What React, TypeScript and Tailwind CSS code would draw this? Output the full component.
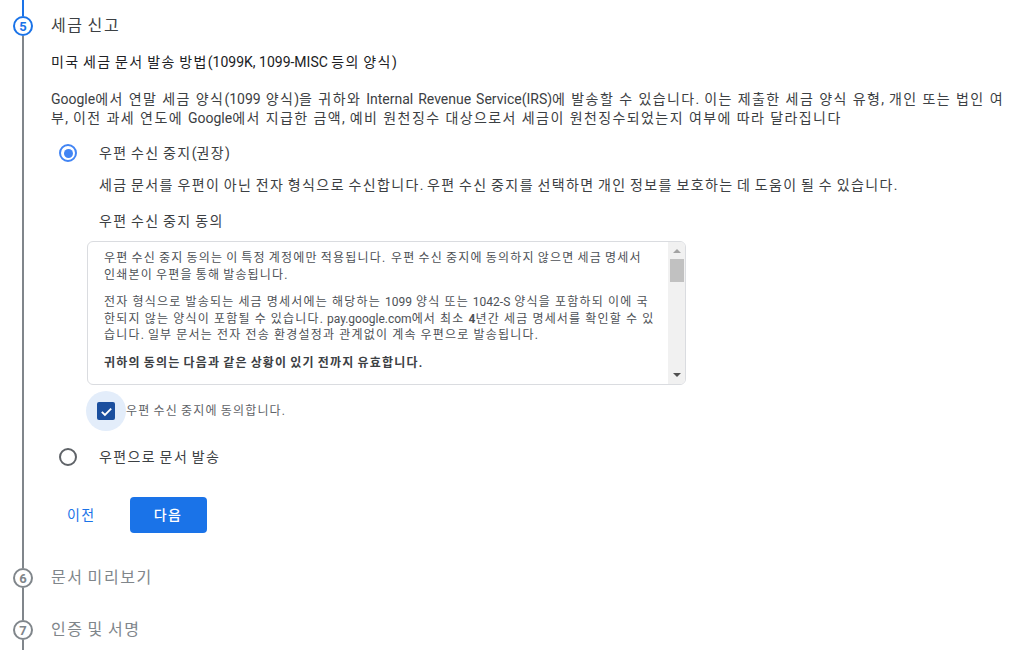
import type { ReactNode } from 'react';

const font = "font-['Roboto','Noto_Sans_CJK_KR',sans-serif]";

// Noto's Hangul is a little narrower than the reference face, so widen only the Hangul runs
function Ko({ children }: { children: string }) {
  const parts = children.split(/([\uAC00-\uD7A3\u3131-\u318E]+)/);
  return (
    <>
      {parts.map((p, i) =>
        i % 2 === 1 ? (
          <span key={i} className="tracking-[0.1em]">
            {p}
          </span>
        ) : (
          p
        ),
      )}
    </>
  );
}

function StepCircle({ n, active }: { n: number; active?: boolean }) {
  return (
    <div
      className={
        active
          ? 'flex h-5 w-5 shrink-0 items-center justify-center rounded-full border-2 border-[#1a73e8] text-[13px] font-bold leading-none text-[#1a73e8]'
          : 'flex h-5 w-5 shrink-0 items-center justify-center rounded-full border-2 border-[#80868b] text-[13px] font-bold leading-none text-[#80868b]'
      }
    >
      {n}
    </div>
  );
}

function Radio({ checked }: { checked?: boolean }) {
  return checked ? (
    <div className="flex h-[18px] w-[18px] items-center justify-center rounded-full border-2 border-[#4285f4]">
      <div className="h-[9px] w-[9px] rounded-full bg-[#4285f4]" />
    </div>
  ) : (
    <div className="h-[18px] w-[18px] rounded-full border-2 border-[#5f6368]" />
  );
}

function FakeScrollbar() {
  return (
    <div className="flex w-[17px] shrink-0 flex-col items-center bg-[#f1f1f1]">
      <div className="mt-[7px] h-0 w-0 border-x-[4px] border-b-[4px] border-x-transparent border-b-[#a3a3a3]" />
      <div className="mt-[6px] h-[23px] w-[14px] bg-[#c1c1c1]" />
      <div className="flex-1" />
      <div className="mb-[7px] h-0 w-0 border-x-[4px] border-t-[4px] border-x-transparent border-t-[#505050]" />
    </div>
  );
}

function StepRow({ left, children, className }: { left: ReactNode; children: ReactNode; className?: string }) {
  return (
    <div className={'flex ' + (className ?? '')}>
      <div className="flex w-[46px] shrink-0 flex-col items-center">{left}</div>
      <div className="min-w-0 flex-1 pl-[5px]">{children}</div>
    </div>
  );
}

export default function App() {
  return (
    <div className={`${font} flex h-[650px] flex-col overflow-hidden bg-white text-[#3c4043]`}>
      {/* step 5 */}
      <StepRow
        left={
          <>
            <div className="h-4 w-[2px] bg-[#1a73e8]" />
            <StepCircle n={5} active />
            <div className="w-[2px] flex-1 bg-[#80868b]" />
          </>
        }
      >
        <div className="pb-[25px] pr-[12px] pt-[14px]">
          <h2 className="text-[16px] leading-6 text-[#3c4043]">
            <Ko>세금 신고</Ko>
          </h2>
          <p className="mt-[14px] text-[14px] leading-5 text-[#202124]">
            <Ko>미국 세금 문서 발송 방법(1099K, 1099-MISC 등의 양식)</Ko>
          </p>
          <p className="mt-[18px] text-[14px] leading-[19px] text-[#3c4043] [word-spacing:1.5px]">
            <Ko>
              Google에서 연말 세금 양식(1099 양식)을 귀하와 Internal Revenue Service(IRS)에 발송할 수 있습니다. 이는 제출한 세금 양식 유형, 개인 또는 법인 여부, 이전 과세 연도에 Google에서 지급한 금액, 예비 원천징수 대상으로서 세금이 원천징수되었는지 여부에 따라 달라집니다
            </Ko>
          </p>

          <div className="mt-[13px] flex h-6 items-center pl-[8px]">
            <Radio checked />
            <span className="ml-[22px] text-[14px] text-[#3c4043]">
              <Ko>우편 수신 중지(권장)</Ko>
            </span>
          </div>

          <div className="pl-[48px]">
            <p className="mt-[10px] text-[14px] leading-5 text-[#3c4043]">
              <Ko>
                세금 문서를 우편이 아닌 전자 형식으로 수신합니다. 우편 수신 중지를 선택하면 개인 정보를 보호하는 데 도움이 될 수 있습니다.
              </Ko>
            </p>
            <p className="mt-[16px] text-[14px] leading-5 text-[#3c4043]">
              <Ko>우편 수신 중지 동의</Ko>
            </p>
          </div>

          <div className="ml-[36px] mt-[10px] flex h-[144px] w-[599px] overflow-hidden rounded-[6px] border border-[#dadce0]">
            <div className="flex-1 overflow-hidden pl-4 pr-3 pt-[8px] text-[12px] leading-[16.5px] text-[#4d5156]">
              <p>
                <Ko>
                  {'우편 수신 중지 동의는 이 특정 계정에만 적용됩니다.\u00a0 우편 수신 중지에 동의하지 않으면 세금 명세서 인쇄본이 우편을 통해 발송됩니다.'}
                </Ko>
              </p>
              <p className="mt-[11px] [word-spacing:1px]">
                <Ko>
                  {'전자 형식으로 발송되는 세금 명세서에는 해당하는 1099 양식 또는 1042-S 양식을 포함하되 이에 국한되지 않는 양식이 포함될 수 있습니다. pay.google.com에서 최소 '}
                </Ko>
                <b>4</b>
                <Ko>년간 세금 명세서를 확인할 수 있습니다. 일부 문서는 전자 전송 환경설정과 관계없이 계속 우편으로 발송됩니다.</Ko>
              </p>
              <p className="mt-[11px] font-bold text-[#3c4043]">
                <Ko>귀하의 동의는 다음과 같은 상황이 있기 전까지 유효합니다.</Ko>
              </p>
            </div>
            <FakeScrollbar />
          </div>

          <div className="ml-[35px] mt-[6px] flex items-center">
            <div className="flex h-10 w-10 items-center justify-center rounded-full bg-[#e3edfa]">
              <div className="flex h-[18px] w-[18px] items-center justify-center rounded-[2px] bg-[#1b4f9e]">
                <svg viewBox="0 0 24 24" className="h-[15px] w-[15px]" fill="none" stroke="white" strokeWidth="3">
                  <path d="M4.5 12.5l5 5 10-10" />
                </svg>
              </div>
            </div>
            <span className="text-[12px] text-[#5f6368]">
              <Ko>우편 수신 중지에 동의합니다.</Ko>
            </span>
          </div>

          <div className="mt-[14px] flex h-6 items-center pl-[8px]">
            <Radio />
            <span className="ml-[22px] text-[14px] text-[#3c4043]">
              <Ko>우편으로 문서 발송</Ko>
            </span>
          </div>

          <div className="mt-[28px] flex items-center">
            <button className="h-9 rounded px-4 text-[14px] text-[#1a73e8]">
              <Ko>이전</Ko>
            </button>
            <button className="ml-[18px] h-9 w-[77px] rounded bg-[#1a73e8] text-[14px] font-medium text-white">
              <Ko>다음</Ko>
            </button>
          </div>
        </div>
      </StepRow>

      {/* step 6 */}
      <StepRow
        className="h-[52px] shrink-0"
        left={
          <>
            <div className="h-[10px] w-[2px] bg-[#80868b]" />
            <StepCircle n={6} />
            <div className="w-[2px] flex-1 bg-[#80868b]" />
          </>
        }
      >
        <p className="pt-[8px] text-[16px] leading-6 text-[#80868b]">
          <Ko>문서 미리보기</Ko>
        </p>
      </StepRow>

      {/* step 7 */}
      <StepRow
        className="flex-1"
        left={
          <>
            <div className="h-[10px] w-[2px] bg-[#80868b]" />
            <StepCircle n={7} />
            <div className="w-[2px] flex-1 bg-[#80868b]" />
          </>
        }
      >
        <p className="pt-[8px] text-[16px] leading-6 text-[#80868b]">
          <Ko>인증 및 서명</Ko>
        </p>
      </StepRow>
    </div>
  );
}
